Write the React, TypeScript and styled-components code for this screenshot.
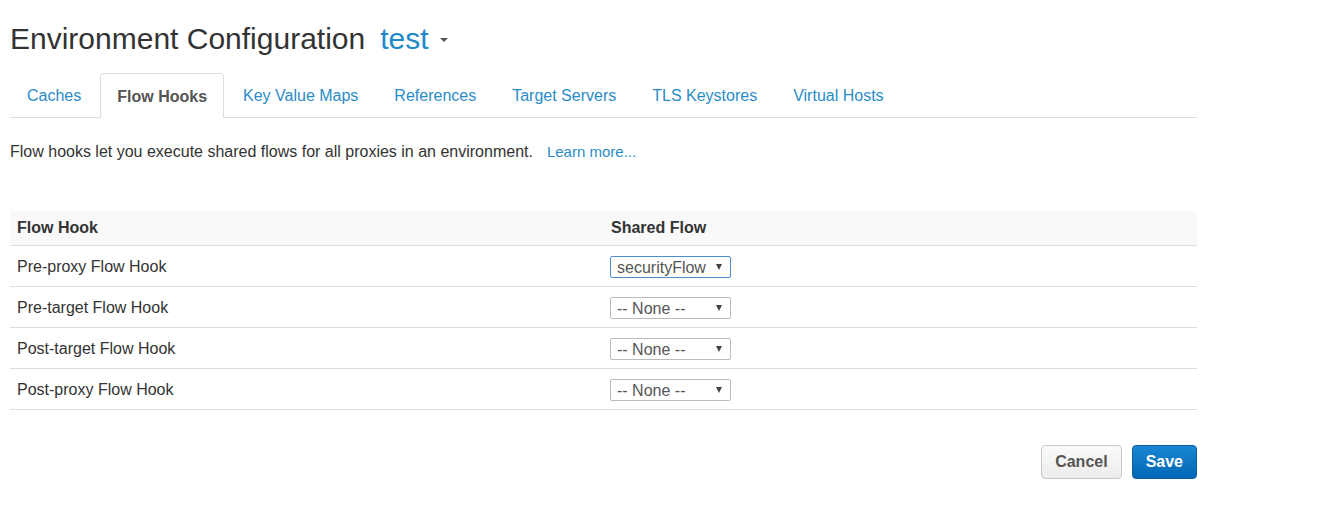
import React from "react";
import styled, { createGlobalStyle } from "styled-components";

const Global = createGlobalStyle`
  html, body { margin: 0; padding: 0; background: #fff; }
  body { font-family: "Liberation Sans", Arial, sans-serif; color: #333; }
`;

const Page = styled.div`
  width: 1187px;
  padding: 0 0 0 10px;
`;

const TitleRow = styled.div`
  display: flex;
  align-items: baseline;
  height: 73px;
`;

const Title = styled.h1`
  margin: 0;
  font-size: 30px;
  font-weight: normal;
  color: #333;
  line-height: 78px;
`;

const EnvName = styled.span`
  margin-left: 15px;
  font-size: 30px;
  color: #1f8ac9;
  display: inline-flex;
  align-items: center;
`;

const Caret = styled.span`
  display: inline-block;
  width: 0;
  height: 0;
  margin-left: 11px;
  border-left: 4px solid transparent;
  border-right: 4px solid transparent;
  border-top: 4px solid #555;
  position: relative;
  top: 1px;
`;

const Tabs = styled.ul`
  display: flex;
  margin: 0;
  padding: 0;
  list-style: none;
  border-bottom: 1px solid #ddd;
  height: 44px;
`;

const Tab = styled.li<{ $active?: boolean }>`
  margin-right: 2px;
  height: ${(p) => (p.$active ? "45px" : "44px")};
  margin-bottom: ${(p) => (p.$active ? "-1px" : "0")};
  box-sizing: border-box;
  display: flex;
  align-items: center;
  font-size: 16px;
  border: ${(p) => (p.$active ? "1px solid #ddd" : "none")};
  border-bottom-color: #fff;
  border-radius: 4px 4px 0 0;
  background: ${(p) => (p.$active ? "#fff" : "transparent")};
  color: ${(p) => (p.$active ? "#555" : "#2a8cc6")};
  font-weight: ${(p) => (p.$active ? "bold" : "normal")};
  padding: ${(p) => (p.$active ? "2px 16px 0 16px" : "2px 17px 0 17px")};
`;

const Description = styled.p`
  margin: 24px 0 0;
  font-size: 16px;
  line-height: 20px;
  color: #333;
`;

const Learn = styled.a`
  margin-left: 14px;
  font-size: 15px;
  color: #2a8cc6;
  text-decoration: none;
`;

const Table = styled.div`
  margin-top: 49px;
  width: 1187px;
`;

const Row = styled.div<{ $head?: boolean }>`
  display: grid;
  grid-template-columns: 594px 1fr;
  align-items: center;
  height: ${(p) => (p.$head ? "34px" : "40px")};
  background: ${(p) => (p.$head ? "#f9f9f9" : "#fff")};
  border-bottom: 1px solid #ddd;
  font-size: 16px;
  font-weight: ${(p) => (p.$head ? "bold" : "normal")};
  color: #333;
`;

const Cell = styled.div<{ $head?: boolean }>`
  padding-left: 7px;
  padding-top: ${(p) => (p.$head ? "0" : "2px")};
  display: flex;
  align-items: center;
`;

const SelectWrap = styled.div`
  position: relative;
  width: 121px;
  height: 22px;
  margin-left: -1px;
`;

const Select = styled.select<{ $focus?: boolean }>`
  appearance: none;
  -webkit-appearance: none;
  display: block;
  width: 121px;
  height: 22px;
  box-sizing: border-box;
  padding: 0 0 0 6px;
  border: 1px solid ${(p) => (p.$focus ? "#4d90d0" : "#bbb")};
  border-radius: 2px;
  background: #fff;
  font-family: "Liberation Sans", Arial, sans-serif;
  font-size: 16px;
  color: #555;
  outline: none;
`;

const Arrow = styled.span`
  position: absolute;
  right: 9px;
  top: 8px;
  width: 0;
  height: 0;
  border-left: 3px solid transparent;
  border-right: 3px solid transparent;
  border-top: 6px solid #444;
  pointer-events: none;
`;

const Actions = styled.div`
  display: flex;
  justify-content: flex-end;
  gap: 10px;
  margin-top: 35px;
`;

const Button = styled.button<{ $primary?: boolean }>`
  height: 34px;
  padding: 0 13px;
  border-radius: 4px;
  font-family: "Liberation Sans", Arial, sans-serif;
  font-size: 16px;
  font-weight: bold;
  border: 1px solid ${(p) => (p.$primary ? "#0a5fa5" : "#c8c8c8")};
  color: ${(p) => (p.$primary ? "#fff" : "#555")};
  background: ${(p) =>
    p.$primary
      ? "linear-gradient(#1a86d4, #0066b5)"
      : "linear-gradient(#fafafa, #ececec)"};
`;

const hooks = [
  { name: "Pre-proxy Flow Hook", value: "securityFlow", focus: true },
  { name: "Pre-target Flow Hook", value: "-- None --" },
  { name: "Post-target Flow Hook", value: "-- None --" },
  { name: "Post-proxy Flow Hook", value: "-- None --" },
];

const tabs = [
  "Caches",
  "Flow Hooks",
  "Key Value Maps",
  "References",
  "Target Servers",
  "TLS Keystores",
  "Virtual Hosts",
];

export default function App() {
  return (
    <>
      <Global />
      <Page>
        <TitleRow>
          <Title>Environment Configuration</Title>
          <EnvName>
            test
            <Caret />
          </EnvName>
        </TitleRow>
        <Tabs>
          {tabs.map((t) => (
            <Tab key={t} $active={t === "Flow Hooks"}>
              {t}
            </Tab>
          ))}
        </Tabs>
        <Description>
          Flow hooks let you execute shared flows for all proxies in an environment.
          <Learn href="#">Learn more...</Learn>
        </Description>
        <Table>
          <Row $head>
            <Cell $head>Flow Hook</Cell>
            <Cell $head>Shared Flow</Cell>
          </Row>
          {hooks.map((h) => (
            <Row key={h.name}>
              <Cell>{h.name}</Cell>
              <Cell>
                <SelectWrap>
                  <Select $focus={h.focus} defaultValue={h.value}>
                    <option>{h.value}</option>
                  </Select>
                  <Arrow />
                </SelectWrap>
              </Cell>
            </Row>
          ))}
        </Table>
        <Actions>
          <Button>Cancel</Button>
          <Button $primary>Save</Button>
        </Actions>
      </Page>
    </>
  );
}
